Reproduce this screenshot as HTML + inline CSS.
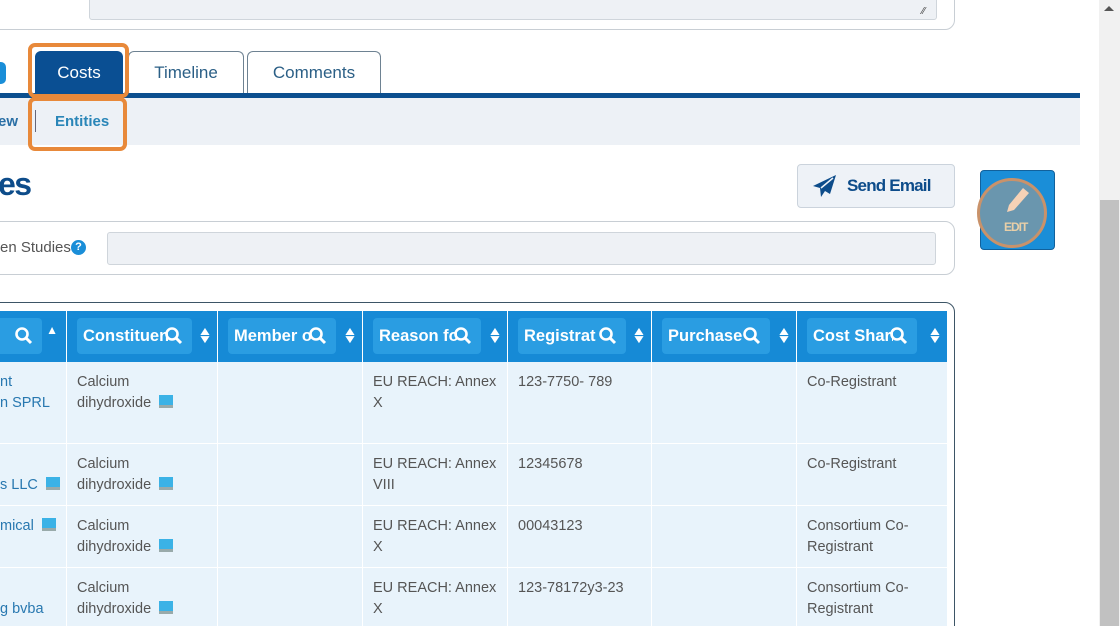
<!DOCTYPE html>
<html><head><meta charset="utf-8"><style>
*{box-sizing:border-box;margin:0;padding:0}
html,body{width:1120px;height:626px;overflow:hidden}
body{background:#fff;font-family:"Liberation Sans",sans-serif;position:relative;color:#4a5560}
.abs{position:absolute}
.tab{position:absolute;top:51px;height:43px;border:1px solid #6e8292;border-bottom:none;border-radius:6px 6px 0 0;background:#fff;color:#2b5f86;font-size:17px;text-align:center;line-height:42px}
.hd{position:absolute;top:311px;height:51px;background:#168ad6;color:#fff;font-weight:bold;font-size:16.5px}
.hd .in{position:absolute;left:10px;top:7px;height:36px;background:#2a9de2;border-radius:4px;line-height:36px;white-space:nowrap}
.hd .tx{position:absolute;left:6px;top:0;overflow:hidden}
.cell{position:absolute;background:#e8f3fb;font-size:14.5px;line-height:20.5px;padding:10px 10px;color:#555;white-space:nowrap;overflow:hidden}
.ico{display:inline-block;width:14px;height:13px;background:#3bb2e6;border-bottom:3px solid #9aa;vertical-align:-1px;margin-left:4px}
.lnk{color:#2878b0}
</style></head><body>
<div class="abs" style="left:-20px;top:-20px;width:975px;height:50px;border:1px solid #c8ced4;border-radius:10px"></div>
<div class="abs" style="left:89px;top:-5px;width:848px;height:25px;background:#eef1f5;border:1px solid #cfd5db;border-radius:3px"></div>
<div class="abs" style="left:922px;top:6px;font-size:10px;color:#444">⁄⁄</div>
<div class="abs" style="left:-10px;top:62px;width:16px;height:22px;background:#1a8ed8;border-radius:5px"></div>
<div class="tab" style="left:35px;width:88px;background:#0a4f93;color:#fff;border-color:#0a4f93">Costs</div>
<div class="tab" style="left:128px;width:116px">Timeline</div>
<div class="tab" style="left:247px;width:134px">Comments</div>
<div class="abs" style="left:0;top:93px;width:1080px;height:5px;background:#0b4f8f"></div>
<div class="abs" style="left:0;top:98px;width:1080px;height:47px;background:#edf1f6"></div>
<div class="abs" style="left:-2px;top:113px;font-size:15px;color:#2a6fa5;font-weight:bold">ew</div>
<div class="abs" style="left:35px;top:110px;width:1px;height:22px;background:#667"></div>
<div class="abs" style="left:55px;top:113px;font-size:15px;color:#2a86b8;font-weight:bold">Entities</div>
<div class="abs" style="left:28px;top:43px;width:101px;height:55px;border:4px solid #e8893a;border-radius:7px"></div>
<div class="abs" style="left:28px;top:97px;width:99px;height:54px;border:4px solid #e8893a;border-radius:7px"></div>
<div class="abs" style="left:-2px;top:166px;font-size:32px;font-weight:bold;color:#0d4c8a;letter-spacing:-1.5px">es</div>
<div class="abs" style="left:797px;top:164px;width:158px;height:44px;background:#eef2f7;border:1px solid #cbd3dc;border-radius:4px;color:#0d4c8a;font-weight:bold;font-size:17px;letter-spacing:-0.8px;line-height:42px;padding-left:49px">Send Email
<svg class="abs" style="left:15px;top:10px" width="24" height="22" viewBox="0 0 24 22"><path d="M23 0L0 11l7 2 1 9 4-6 5 3z" fill="#0d4c8a"/><path d="M8 13l12-10" stroke="#eef2f7" stroke-width="1.5"/></svg></div>
<div class="abs" style="left:980px;top:170px;width:75px;height:80px;background:#1a8ed8;border:1px solid #11619c;border-radius:4px"></div>
<div class="abs" style="left:977px;top:178px;width:70px;height:70px;border-radius:50%;background:#6a96ae;border:3px solid #c9926a"></div>
<svg class="abs" style="left:1001px;top:186px" width="34" height="32" viewBox="0 0 34 32"><path d="M22 2l6 5-15 17-7 2 2-7z" fill="#f6d2b6"/></svg>
<div class="abs" style="left:1004px;top:220px;font-size:12px;font-weight:bold;color:#e8cfa8;letter-spacing:-1px">EDIT</div>
<div class="abs" style="left:-20px;top:221px;width:975px;height:54px;border:1px solid #c8ced4;border-radius:10px"></div>
<div class="abs" style="left:0;top:239px;font-size:15px;color:#555">en Studies</div>
<div class="abs" style="left:71px;top:240px;width:15px;height:15px;border-radius:50%;background:#1a8ed8;color:#fff;font-size:11px;font-weight:bold;text-align:center;line-height:15px">?</div>
<div class="abs" style="left:107px;top:232px;width:829px;height:33px;background:#eef1f5;border:1px solid #cfd5db;border-radius:3px"></div>
<div class="abs" style="left:-20px;top:302px;width:975px;height:340px;border:1px solid #3d5566;border-radius:10px"></div>
<div class="abs" style="left:0;top:311px;width:947px;height:320px;background:#fff"></div>
<div class="hd" style="left:0;width:66px"><div class="in" style="left:-10px;width:52px"></div><div class="abs" style="right:8px;top:12px;font-size:12px">▲</div></div>
<div class="hd" style="left:67px;width:150px"><div class="in" style="width:115px"><span class="tx" style="width:85px">Constituent</span></div></div>
<div class="hd" style="left:218px;width:144px"><div class="in" style="width:108px"><span class="tx" style="width:78px">Member of</span></div></div>
<div class="hd" style="left:363px;width:144px"><div class="in" style="width:108px"><span class="tx" style="width:78px">Reason for</span></div></div>
<div class="hd" style="left:508px;width:143px"><div class="in" style="width:108px"><span class="tx" style="width:78px">Registrat</span></div></div>
<div class="hd" style="left:652px;width:144px"><div class="in" style="width:108px"><span class="tx" style="width:80px">Purchase</span></div></div>
<div class="hd" style="left:797px;width:150px"><div class="in" style="width:110px"><span class="tx" style="width:80px">Cost Sharing</span></div></div>
<script>
var Q='<svg width="20" height="20" viewBox="0 0 20 20" style="margin-top:8px"><circle cx="8" cy="8" r="5.5" stroke="#fff" stroke-width="2.6" fill="none"/><path d="M12 12l5 5" stroke="#fff" stroke-width="3"/></svg>';
document.querySelectorAll('.hd').forEach(function(h,i){
 var r=h.querySelector('.in');
 var q=document.createElement('div');q.className='abs';q.style.cssText='right:4px;top:0;width:24px;height:36px';q.innerHTML=Q;r.appendChild(q);
 if(i>0){var s=document.createElement('div');s.className='abs';s.style.cssText='right:6px;top:16px;font-size:12px;line-height:8px;text-align:center;transform:scaleX(1.3)';s.innerHTML='▲<br>▼';h.appendChild(s);}
});
var cols=[[0,66],[67,150],[218,144],[363,144],[508,143],[652,144],[797,150]];
var rows=[[362,81],[444,61],[506,61],[568,60]];
var I='<span class="ico"></span>';
var data=[
['<span class="lnk">nt<br>n SPRL</span>','Calcium<br>dihydroxide '+I,'','EU REACH: Annex<br>X','123-7750- 789','','Co-Registrant'],
['<br><span class="lnk">s LLC</span> '+I,'Calcium<br>dihydroxide '+I,'','EU REACH: Annex<br>VIII','12345678','','Co-Registrant'],
['<span class="lnk">mical</span> '+I,'Calcium<br>dihydroxide '+I,'','EU REACH: Annex<br>X','00043123','','Consortium Co-<br>Registrant'],
['<br><span class="lnk">g bvba</span>','Calcium<br>dihydroxide '+I,'','EU REACH: Annex<br>X','123-78172y3-23','','Consortium Co-<br>Registrant']];
var h='';
rows.forEach(function(r,ri){cols.forEach(function(c,ci){h+='<div class="cell" style="left:'+c[0]+'px;top:'+r[0]+'px;width:'+c[1]+'px;height:'+r[1]+'px;'+(ci==0?'padding-left:0':'')+'">'+data[ri][ci]+'</div>';});});
document.body.insertAdjacentHTML('beforeend',h);
</script>
<div class="abs" style="left:1099px;top:0;width:21px;height:626px;background:#f1f1f1"></div>
<div class="abs" style="left:1100px;top:200px;width:19px;height:426px;background:#c1c1c1"></div>
<div class="abs" style="left:1104px;top:6px;width:0;height:0;border-left:5px solid transparent;border-right:5px solid transparent;border-bottom:5px solid #555"></div>
</body></html>
